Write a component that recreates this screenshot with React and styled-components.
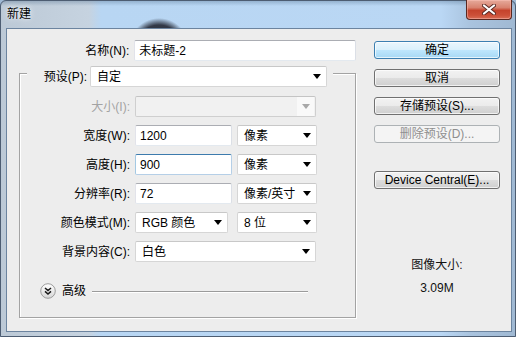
import React from "react";
import styled, { createGlobalStyle } from "styled-components";

const Global = createGlobalStyle`
  html, body { margin: 0; padding: 0; }
  body {
    width: 516px; height: 337px; overflow: hidden;
    background: #9fb9d4;
    font-family: "Liberation Sans", "Noto Sans CJK SC", sans-serif;
    font-size: 12px; color: #000;
  }
`;

const Frame = styled.div`
  box-sizing: border-box;
  width: 516px;
  height: 337px;
  border: 1px solid #4d5d72;
  border-radius: 6px 6px 0 0;
  padding: 0 3px 4px 5px;
  display: flex;
  flex-direction: column;
  background:
    radial-gradient(circle at 158px 47px, rgba(32, 36, 46, 0.96) 0, rgba(36, 40, 52, 0.9) 23px, rgba(70, 85, 105, 0) 30px),
    linear-gradient(to bottom, rgba(80, 110, 140, 0.35) 0, rgba(80, 110, 140, 0) 5px),
    linear-gradient(to right, #bcc9d6 0, #c6d3e0 88px, #b8d6f3 100px, #bad7f4 440px, #a9c3de 470px, #a0b9d3 100%);
`;

const TitleBar = styled.div`
  height: 27px;
  display: flex;
  align-items: flex-start;
`;

const Title = styled.div`
  margin: 6px 0 0 1px;
  line-height: 14px;
  font-size: 12px;
  text-shadow: 0 0 6px rgba(255, 255, 255, 0.9), 0 0 2px rgba(255, 255, 255, 0.8);
`;

const CloseButton = styled.div`
  margin: -1px 0 0 auto;
  width: 46px;
  height: 20px;
  box-sizing: border-box;
  border: 1px solid #5a2820;
  border-top: none;
  border-radius: 0 0 4px 4px;
  background: linear-gradient(to bottom, #e6aa9b 0%, #d8826f 40%, #c5432c 55%, #cc5038 80%, #d86d55 100%);
  box-shadow: inset 0 0 0 1px rgba(255, 200, 190, 0.45);
  display: flex;
  align-items: center;
  justify-content: center;
`;

const Client = styled.div`
  flex: 1;
  box-sizing: border-box;
  border: 1px solid #6c849f;
  background: #ededed;
  display: flex;
  padding-top: 11px;
`;

const LeftPane = styled.div`
  margin-left: 12px;
  width: 337px;
  display: flex;
  flex-direction: column;
`;

const Row = styled.div`
  display: flex;
  align-items: center;
  height: 21px;
`;

const Label = styled.div`
  width: ${(p) => p.$w || 111}px;
  text-align: right;
  line-height: 14px;
  white-space: nowrap;
  color: ${(p) => (p.$disabled ? "#a3a3a3" : "#000")};
  margin-right: ${(p) => p.$gap ?? 5}px;
`;

const Input = styled.div`
  box-sizing: border-box;
  width: ${(p) => p.$w}px;
  height: ${(p) => p.$h || 21}px;
  background: #fff;
  border: 1px solid;
  border-radius: 2px;
  border-color: ${(p) =>
    p.$focus ? "#3d7bad #b5cfe7 #b5cfe7 #a4c9e3" : "#abadb3 #dbdfe6 #e3e9ef #e2e3ea"};
  padding-left: 4px;
  display: flex;
  align-items: center;
  line-height: 14px;
  white-space: nowrap;
`;

const SelectBox = styled.div`
  box-sizing: border-box;
  width: ${(p) => p.$w}px;
  height: 21px;
  background: ${(p) => (p.$disabled ? "#f1f1f1" : "#fff")};
  border: 1px solid ${(p) => (p.$disabled ? "#cfcfcf" : "#d6d6d6")};
  border-top-color: ${(p) => (p.$disabled ? "#c4c4c4" : "#c8c8c8")};
  border-radius: 2px;
  display: flex;
  align-items: center;
  padding-left: 6px;
  line-height: 14px;
  white-space: nowrap;
`;

const SelectText = styled.span`
  flex: 1;
`;

const ArrowBox = styled.div`
  width: 17px;
  align-self: stretch;
  display: flex;
  align-items: center;
  justify-content: center;
  background: ${(p) => (p.$disabled ? "#f9f9f9" : "transparent")};
  margin-right: 1px;
`;

const GroupBox = styled.div`
  margin-top: 12px;
  box-sizing: border-box;
  height: 245px;
  border: 1px solid #a3a3a3;
  box-shadow: inset 1px 1px 0 #fff, 1px 1px 0 #fff;
  display: flex;
  flex-direction: column;
`;

const PresetRow = styled(Row)`
  align-self: flex-start;
  margin: -8px 0 0 7px;
  padding-right: 6px;
  background: #ededed;
`;

const Fields = styled.div`
  margin-top: 9px;
  display: grid;
  grid-template-columns: 110px auto;
  column-gap: 5px;
  row-gap: 8px;
  align-items: center;
`;

const Pair = styled.div`
  display: grid;
  grid-template-columns: 102px 80px;
  align-items: center;
`;

const AdvancedRow = styled.div`
  margin-top: 21px;
  padding-left: 20px;
  display: flex;
  align-items: center;
  height: 16px;
`;

const AdvText = styled.span`
  margin-left: 6px;
  line-height: 14px;
`;

const Rule = styled.div`
  margin-left: 6px;
  width: 216px;
  height: 1px;
  background: #9b9b9b;
  box-shadow: 0 1px 0 #fff;
`;

const RightPane = styled.div`
  margin-left: 18px;
  width: 126px;
  display: flex;
  flex-direction: column;
  padding-top: 1px;
`;

const Button = styled.div`
  box-sizing: border-box;
  height: 18px;
  margin-top: ${(p) => p.$mt ?? 0}px;
  border: 1px solid ${(p) => (p.$default ? "#3c7fb1" : p.$disabled ? "#adb2b5" : "#707070")};
  border-radius: 3px;
  background: ${(p) =>
    p.$disabled
      ? "#f4f4f4"
      : p.$default
      ? "linear-gradient(to bottom, #eaf6fd 0%, #d9f0fc 50%, #bee6fd 51%, #a7d9f5 100%)"
      : "linear-gradient(to bottom, #f2f2f2 0%, #ebebeb 50%, #dddddd 51%, #cfcfcf 100%)"};
  box-shadow: inset 0 0 0 1px rgba(255, 255, 255, ${(p) => (p.$disabled ? 0 : 0.7)});
  color: ${(p) => (p.$disabled ? "#8f8f8f" : "#000")};
  display: flex;
  align-items: center;
  justify-content: center;
  line-height: 14px;
  white-space: nowrap;
`;

const Info = styled.div`
  margin-top: 68px;
  display: flex;
  flex-direction: column;
  align-items: center;
  gap: 7px;
  line-height: 16px;
  color: #111;
`;

const Arrow = ({ disabled }) => (
  <svg width="8" height="5" viewBox="0 0 8 5">
    <path d="M0 0H8L4 5Z" fill={disabled ? "#a8a8a8" : "#000"} />
  </svg>
);

const Select = ({ w, children, disabled }) => (
  <SelectBox $w={w} $disabled={disabled}>
    <SelectText>{children}</SelectText>
    <ArrowBox $disabled={disabled}>
      <Arrow disabled={disabled} />
    </ArrowBox>
  </SelectBox>
);

const ExpandIcon = () => (
  <svg width="16" height="16" viewBox="0 0 16 16">
    <defs>
      <linearGradient id="eg" x1="0" y1="0" x2="0" y2="1">
        <stop offset="0" stopColor="#ffffff" />
        <stop offset="1" stopColor="#d6d6d6" />
      </linearGradient>
    </defs>
    <circle cx="8" cy="8" r="7.3" fill="url(#eg)" stroke="#9c9c9c" strokeWidth="1" />
    <path d="M5 5L8 7.6L11 5M5 8.4L8 11L11 8.4" fill="none" stroke="#1a1a1a" strokeWidth="1.5" />
  </svg>
);

const CloseX = () => (
  <svg width="14" height="11" viewBox="0 0 14 11">
    <path d="M2 1.5L12 9.5M12 1.5L2 9.5" stroke="#5a2a24" strokeWidth="4" strokeLinecap="round" />
    <path d="M2 1.5L12 9.5M12 1.5L2 9.5" stroke="#fff" strokeWidth="2.2" strokeLinecap="round" />
  </svg>
);

export default function App() {
  return (
    <>
      <Global />
      <Frame>
        <TitleBar>
          <Title>新建</Title>
          <CloseButton>
            <CloseX />
          </CloseButton>
        </TitleBar>
        <Client>
          <LeftPane>
            <Row>
              <Label>名称(N):</Label>
              <Input $w={223}>未标题-2</Input>
            </Row>
            <GroupBox>
              <PresetRow>
                <Label $w={60} $gap={3}>预设(P):</Label>
                <Select w={237}>自定</Select>
              </PresetRow>
              <Fields>
                <Label $w={110} $gap={0} $disabled>大小(I):</Label>
                <Select w={181} disabled></Select>

                <Label $w={110} $gap={0}>宽度(W):</Label>
                <Pair>
                  <Input $w={97}>1200</Input>
                  <Select w={80}>像素</Select>
                </Pair>

                <Label $w={110} $gap={0}>高度(H):</Label>
                <Pair>
                  <Input $w={97} $focus>900</Input>
                  <Select w={80}>像素</Select>
                </Pair>

                <Label $w={110} $gap={0}>分辨率(R):</Label>
                <Pair>
                  <Input $w={97}>72</Input>
                  <Select w={80}>像素/英寸</Select>
                </Pair>

                <Label $w={110} $gap={0}>颜色模式(M):</Label>
                <Pair>
                  <Select w={93}>RGB 颜色</Select>
                  <Select w={80}>8 位</Select>
                </Pair>

                <Label $w={110} $gap={0}>背景内容(C):</Label>
                <Select w={181}>白色</Select>
              </Fields>
              <AdvancedRow>
                <ExpandIcon />
                <AdvText>高级</AdvText>
                <Rule />
              </AdvancedRow>
            </GroupBox>
          </LeftPane>
          <RightPane>
            <Button $default>确定</Button>
            <Button $mt={10}>取消</Button>
            <Button $mt={10}>存储预设(S)...</Button>
            <Button $mt={10} $disabled>删除预设(D)...</Button>
            <Button $mt={28}>Device Central(E)...</Button>
            <Info>
              <div>图像大小:</div>
              <div>3.09M</div>
            </Info>
          </RightPane>
        </Client>
      </Frame>
    </>
  );
}
